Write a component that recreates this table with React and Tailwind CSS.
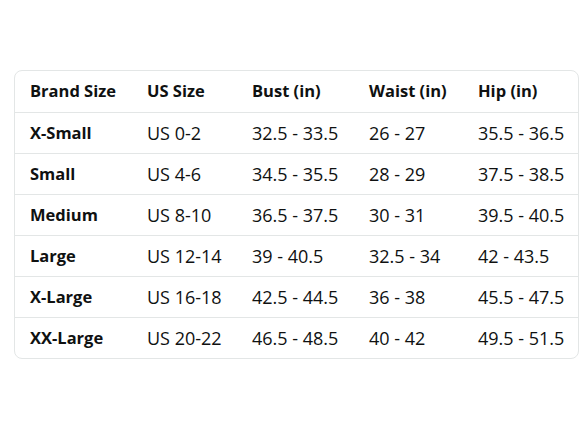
import React from 'react';

const headers = ['Brand Size', 'US Size', 'Bust (in)', 'Waist (in)', 'Hip (in)'];

const rows = [
  ['X-Small', 'US 0-2', '32.5 - 33.5', '26 - 27', '35.5 - 36.5'],
  ['Small', 'US 4-6', '34.5 - 35.5', '28 - 29', '37.5 - 38.5'],
  ['Medium', 'US 8-10', '36.5 - 37.5', '30 - 31', '39.5 - 40.5'],
  ['Large', 'US 12-14', '39 - 40.5', '32.5 - 34', '42 - 43.5'],
  ['X-Large', 'US 16-18', '42.5 - 44.5', '36 - 38', '45.5 - 47.5'],
  ['XX-Large', 'US 20-22', '46.5 - 48.5', '40 - 42', '49.5 - 51.5'],
];

const cols = 'grid grid-cols-[117px_105px_117px_109px_116px]';

export default function App() {
  return (
    <div className="w-[588px] h-[441px] bg-white pt-[70px] pl-[14px] text-[#0f1111]" style={{ fontFamily: '"Open Sans", "Noto Sans", sans-serif' }}>
      <div className="w-[565px] border border-[#e3e6e6] rounded-[8px] overflow-hidden">
        <div className={`${cols} h-[41px] items-center font-bold text-[16.5px]`}>
          {headers.map(h => (
            <div key={h} className="pl-[15px] whitespace-nowrap">{h}</div>
          ))}
        </div>
        {rows.map(r => (
          <div key={r[0]} className={`${cols} h-[41px] items-center border-t border-[#e3e6e6] text-[18px]`}>
            {r.map((c, i) => (
              <div key={i} className={`pl-[15px] whitespace-nowrap ${i === 0 ? 'font-bold text-[16.5px]' : ''}`}>{c}</div>
            ))}
          </div>
        ))}
      </div>
    </div>
  );
}
